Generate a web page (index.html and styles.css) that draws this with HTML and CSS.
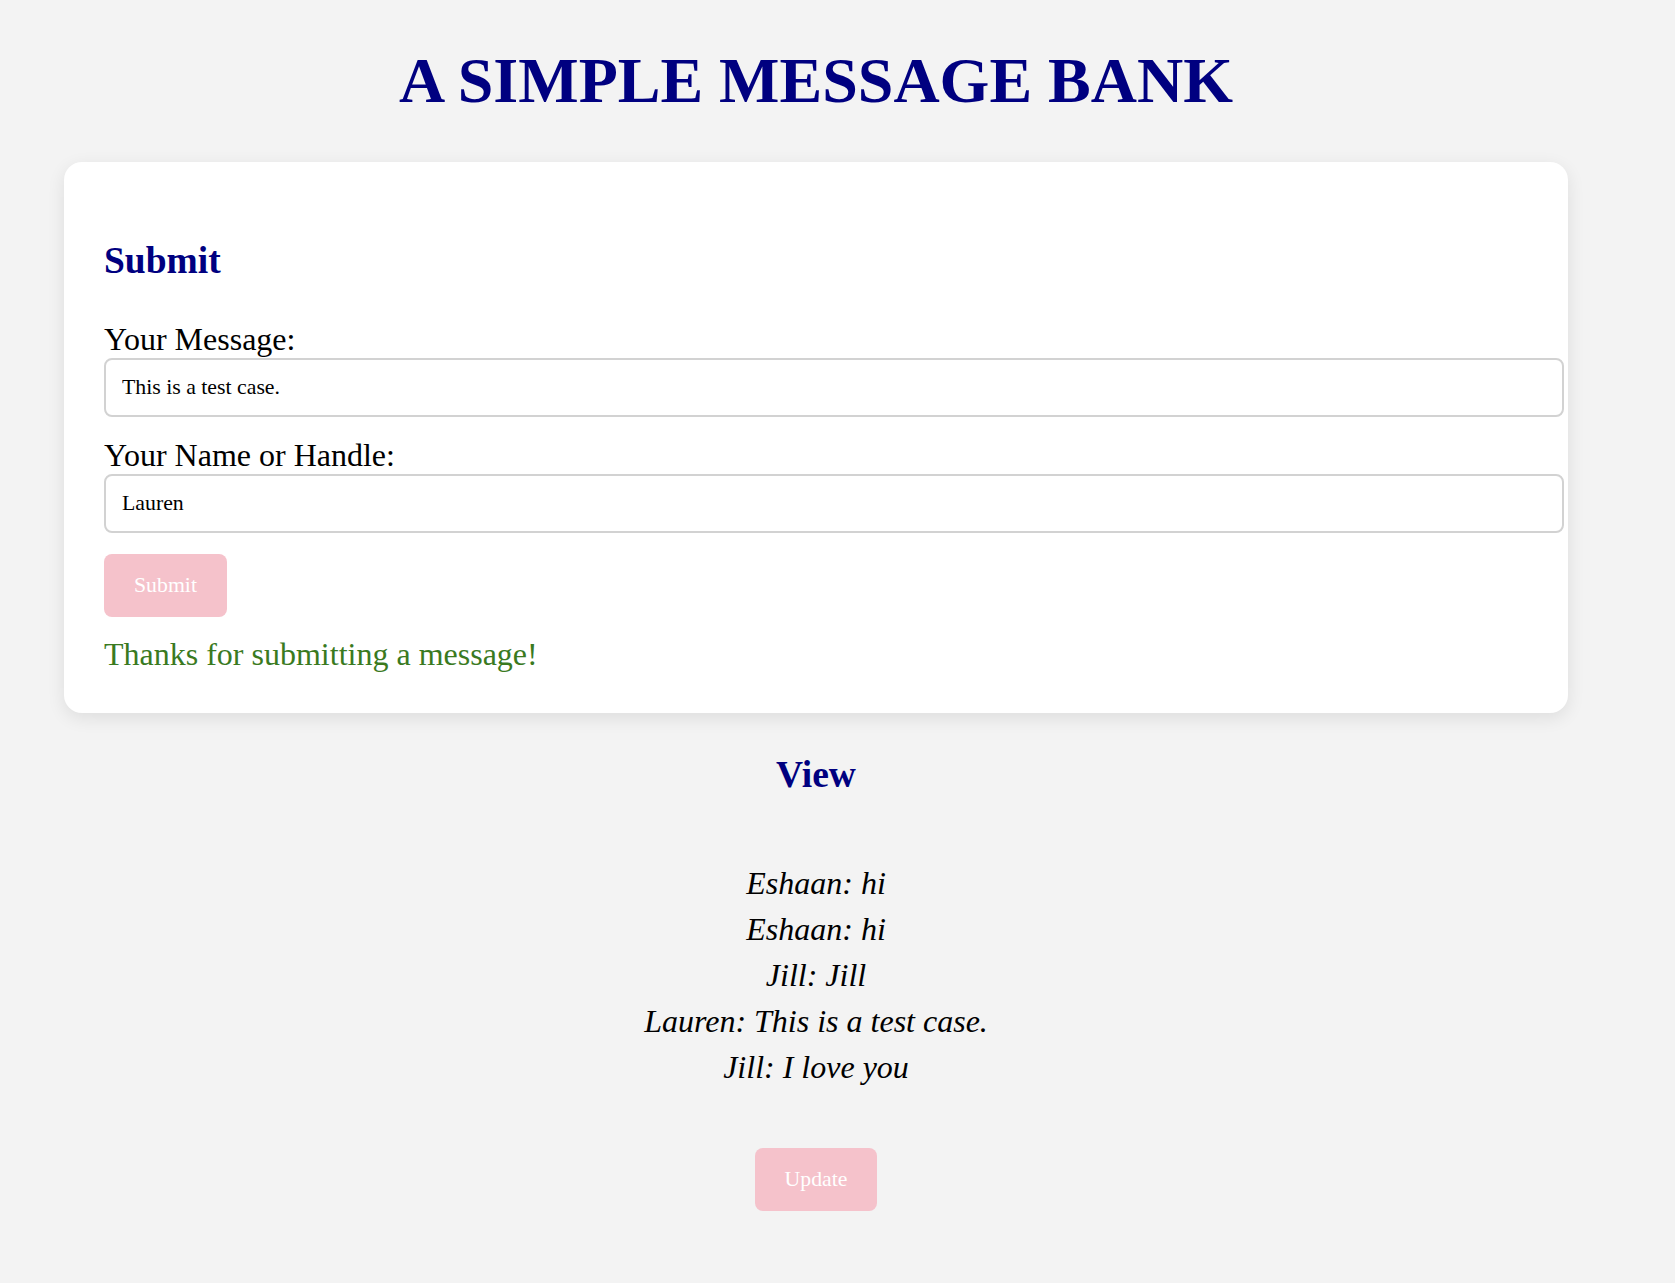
FILE: index.html
```html
<!DOCTYPE html>
<html lang="en">
<head>
<meta charset="utf-8">
<title>A Simple Message Bank</title>
<link rel="stylesheet" href="styles.css">
</head>
<body>
<div class="page">
  <h1 class="title">A SIMPLE MESSAGE BANK</h1>
  <div class="card">
    <h3 class="section-title">Submit</h3>
    <label class="field-label" for="msg">Your Message:</label>
    <input class="text-input" id="msg" type="text" value="This is a test case.">
    <label class="field-label second" for="handle">Your Name or Handle:</label>
    <input class="text-input" id="handle" type="text" value="Lauren">
    <div class="btn-row"><button class="btn">Submit</button></div>
    <p class="thanks">Thanks for submitting a message!</p>
  </div>
  <div class="view">
    <h3 class="section-title view-title">View</h3>
    <ul class="messages">
      <li>Eshaan: hi</li>
      <li>Eshaan: hi</li>
      <li>Jill: Jill</li>
      <li>Lauren: This is a test case.</li>
      <li>Jill: I love you</li>
    </ul>
    <div class="btn-row update-row"><button class="btn">Update</button></div>
  </div>
</div>
</body>
</html>
```
FILE: styles.css
```css
html, body {
  margin: 0;
  padding: 0;
  background: #f3f3f3;
}
body {
  font-family: "Liberation Serif", "Times New Roman", serif;
  color: #000;
}
.page {
  width: 1504px;
  margin: 0 0 0 64px;
  padding-top: 44px;
  padding-bottom: 40px;
}
.title {
  margin: 0 0 44px;
  font-size: 64px;
  line-height: 74px;
  font-weight: bold;
  text-align: center;
  color: #000080;
}
.card {
  background: #fff;
  border-radius: 18px;
  padding: 40px;
  box-shadow: 0 5px 18px rgba(0, 0, 0, 0.09);
}
.section-title {
  margin: 37px 0;
  font-size: 37.5px;
  line-height: 44px;
  font-weight: bold;
  color: #000080;
}
.field-label {
  display: block;
  font-size: 32px;
  line-height: 38px;
}
.field-label.second {
  margin-top: 18.5px;
}
.text-input {
  display: block;
  box-sizing: content-box;
  width: 100%;
  margin: 0;
  padding: 15px 16px;
  border: 2px solid #d2d2d2;
  border-radius: 8px;
  background: #fff;
  font-family: "Liberation Serif", "Times New Roman", serif;
  font-size: 21.8px;
  line-height: 25px;
  color: #000;
  outline: none;
}
.btn-row {
  margin-top: 21px;
}
.btn {
  display: inline-block;
  border: none;
  border-radius: 8px;
  background: #f5c2cb;
  color: #fff;
  padding: 19px 30px;
  font-family: "Liberation Serif", "Times New Roman", serif;
  font-size: 21.8px;
  line-height: 25px;
  cursor: pointer;
}
.thanks {
  margin: 18px 0 0;
  font-size: 32px;
  line-height: 38px;
  color: #3a7a1f;
}
.view {
  text-align: center;
}
.view-title {
  margin: 40px 0 63.5px;
}
.messages {
  list-style: none;
  margin: 0;
  padding: 0;
  font-size: 32px;
  line-height: 46px;
  font-style: italic;
}
.update-row {
  margin-top: 58px;
}
```
